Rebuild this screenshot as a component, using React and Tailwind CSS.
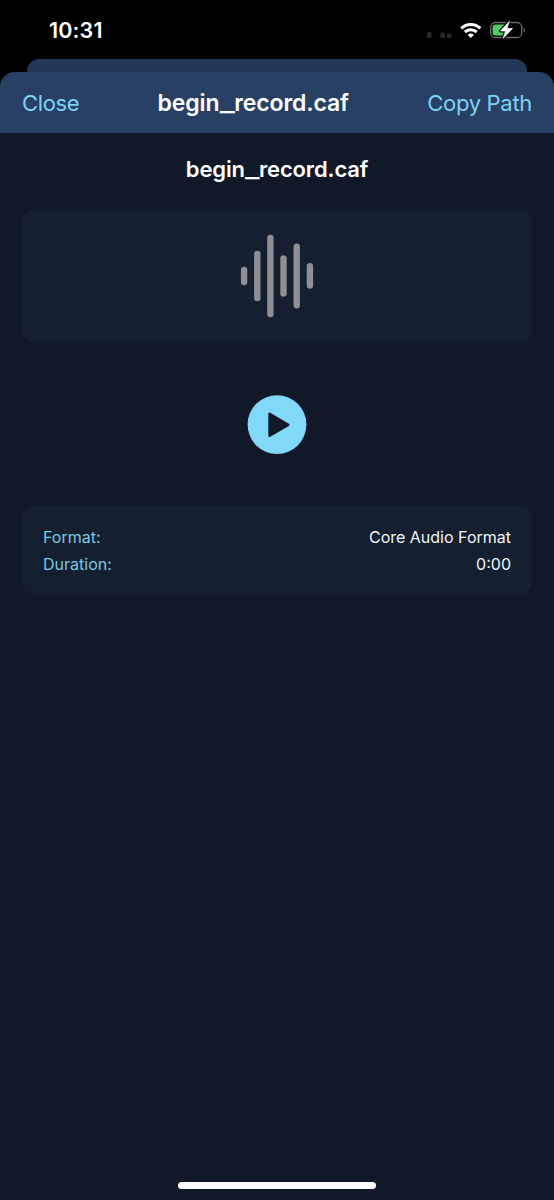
const BARS = [
  { x: 0.9, y: 46.7, h: 18.6 },
  { x: 14.1, y: 30.8, h: 50.5 },
  { x: 27.2, y: 14.7, h: 82.5 },
  { x: 40.3, y: 35.3, h: 41.5 },
  { x: 53.5, y: 23.6, h: 64.8 },
  { x: 66.7, y: 43.1, h: 25.6 },
];

function StatusBar() {
  return (
    <div className="flex h-[59px] items-start justify-between pt-[16px] pr-[29px] pl-[49px] text-white">
      <span className="text-[21.5px] leading-[28px] font-semibold tracking-[0.15px]">10:31</span>
      <svg className="mt-[4px]" width="98" height="22" viewBox="427 20 98 22" fill="none">
        <g fill="#29292b">
          <rect x="427" y="32" width="4.5" height="6" rx="1.3" />
          <rect x="440.5" y="32.500" width="4.500" height="5.500" rx="1.300" />
          <rect x="447" y="33.500" width="4.500" height="4.500" rx="1.300" />
        </g>
        <g stroke="#fff" strokeWidth="3.100">
          <path d="M461.300 28.300a13.700 13.700 0 0 1 19 0" />
          <path d="M464.900 32a8.700 8.700 0 0 1 11.800 0" />
        </g>
        <path fill="#fff" d="M467.700 34.900a4.400 4.400 0 0 1 6.200 0l-3.100 3z" />
        <rect x="490.700" y="22.500" width="31" height="15" rx="4.600" stroke="#6b6b6b" strokeWidth="1.300" />
        <path d="M523.600 27.600a2.900 2.900 0 0 1 0 5z" fill="#6b6b6b" />
        <path d="M495.500 24.500H505v11h-9.500a3 3 0 0 1-3-3v-5a3 3 0 0 1 3-3z" fill="#55c867" />
        <path
          d="M509.400 21.300L500.400 31h5.200l-2.500 7.400 9.400-9.900h-5.400z"
          fill="#fff"
          stroke="#000"
          strokeWidth="2.800"
          strokeLinejoin="round"
        />
        <path
          d="M509.400 21.300L500.400 31h5.200l-2.500 7.400 9.400-9.900h-5.400z"
          fill="#fff"
          stroke="#fff"
          strokeWidth=".7"
          strokeLinejoin="round"
        />
      </svg>
    </div>
  );
}

function FileName() {
  return (
    <>
      begin<span className="mx-[2px] inline-block scale-x-[1.4]">_</span>record.caf
    </>
  );
}

function InfoRow({ label, value }) {
  return (
    <div className="flex h-[27px] items-center justify-between text-[16px]">
      <span className="text-[#7bc8e2]">{label}</span>
      <span className="text-[#f1f5fb]">{value}</span>
    </div>
  );
}

export default function App() {
  return (
    <div className="flex h-[1200px] w-[554px] flex-col overflow-hidden bg-black font-['Inter','Liberation_Sans',sans-serif]">
      <StatusBar />
      <div className="mx-[27px] h-[13px] shrink-0 rounded-t-[12px] bg-[#233859]" />
      <main className="flex flex-1 flex-col rounded-t-[15px] bg-[#111827]">
        <header className="flex h-[61px] items-center justify-between rounded-t-[15px] bg-[#274064] px-[22px] pt-px whitespace-nowrap">
          <button className="text-left text-[22px] tracking-[-0.35px] text-[#7dd3f5]">Close</button>
          <h1 className="text-[23px] font-semibold tracking-[-0.1px] text-white">
            <FileName />
          </h1>
          <button className="text-right text-[22px] tracking-[-0.3px] text-[#7dd3f5]">Copy Path</button>
        </header>
        <section className="flex flex-col px-[22px] pt-[20px]">
          <h2 className="text-center text-[22px] leading-[32px] font-semibold tracking-[-0.15px] text-white">
            <FileName />
          </h2>
          <div className="mt-[24px] flex h-[134px] items-center justify-center rounded-[13px] bg-[#141f30]">
            <svg width="74" height="112" viewBox="0 0 74 112" fill="#8e8e93">
              {BARS.map((bar) => (
                <rect key={bar.x} x={bar.x} y={bar.y} width="6.400" height={bar.h} rx="3.200" />
              ))}
            </svg>
          </div>
          <button className="mt-[52px] self-center" aria-label="Play">
            <svg width="60" height="60" viewBox="0 0 60 60">
              <circle cx="30" cy="29.600" r="29.400" fill="#82d8f9" />
              <path
                d="M22.600 18.900v21.800L41.200 29.800z"
                fill="#111827"
                stroke="#111827"
                strokeWidth="2.600"
                strokeLinejoin="round"
              />
            </svg>
          </button>
          <div className="mt-[51px] flex h-[89px] flex-col rounded-[13px] bg-[#141f30] px-[21px] pt-[17px]">
            <InfoRow label="Format:" value="Core Audio Format" />
            <InfoRow label="Duration:" value="0:00" />
          </div>
        </section>
        <div className="mt-auto mb-[11px] h-[7px] w-[198px] self-center rounded-full bg-white" />
      </main>
    </div>
  );
}
